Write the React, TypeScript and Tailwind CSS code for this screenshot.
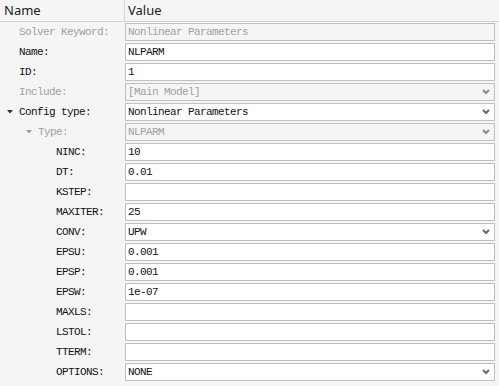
import React from 'react';

type Row = {
  label: string;
  value: string;
  level: number;
  disabled?: boolean;
  select?: boolean;
  toggle?: boolean;
};

const rows: Row[] = [
  { label: 'Solver Keyword:', value: 'Nonlinear Parameters', level: 0, disabled: true },
  { label: 'Name:', value: 'NLPARM', level: 0 },
  { label: 'ID:', value: '1', level: 0 },
  { label: 'Include:', value: '[Main Model]', level: 0, disabled: true, select: true },
  { label: 'Config type:', value: 'Nonlinear Parameters', level: 0, select: true, toggle: true },
  { label: 'Type:', value: 'NLPARM', level: 1, disabled: true, select: true, toggle: true },
  { label: 'NINC:', value: '10', level: 2 },
  { label: 'DT:', value: '0.01', level: 2 },
  { label: 'KSTEP:', value: '', level: 2 },
  { label: 'MAXITER:', value: '25', level: 2 },
  { label: 'CONV:', value: 'UPW', level: 2, select: true },
  { label: 'EPSU:', value: '0.001', level: 2 },
  { label: 'EPSP:', value: '0.001', level: 2 },
  { label: 'EPSW:', value: '1e-07', level: 2 },
  { label: 'MAXLS:', value: '', level: 2 },
  { label: 'LSTOL:', value: '', level: 2 },
  { label: 'TTERM:', value: '', level: 2 },
  { label: 'OPTIONS:', value: 'NONE', level: 2, select: true },
];

const indent = ['pl-[19px]', 'pl-[38px]', 'pl-[56px]'];
const arrowPos = ['pl-[7px]', 'pl-[26px]', 'pl-[45px]'];

const Chevron = ({ gray }: { gray?: boolean }) => (
  <svg width="8" height="6" viewBox="0 0 8 6" className="shrink-0">
    <path d="M1 1 L4 4 L7 1" fill="none" stroke={gray ? '#888' : '#666'} strokeWidth="2" />
  </svg>
);

const Caret = ({ gray }: { gray?: boolean }) => (
  <svg width="6" height="4" viewBox="0 0 6 4" className="shrink-0">
    <path d="M0 0 H6 L3 3.5 Z" fill={gray ? '#9a9a9a' : '#333'} />
  </svg>
);

export default function App() {
  return (
    <div className="w-[499px] h-[386px] bg-[#f5f5f5] overflow-hidden" style={{ fontFamily: '"Liberation Mono", monospace' }}>
      <div className="flex h-[22px] border-b border-[#d4d4d4] text-[13px] text-[#1a1a1a]" style={{ fontFamily: '"Noto Sans", sans-serif' }}>
        <div className="w-[125px] border-r border-[#d4d4d4] pl-[4px] flex items-center">Name</div>
        <div className="flex-1 pl-[3px] flex items-center">Value</div>
      </div>
      <div className="flex flex-col gap-[2px] pt-[1px]">
        {rows.map((r) => (
          <div key={r.label} className="flex h-[18px] text-[11px] tracking-[-0.6px]">
            <div className={`relative w-[125px] flex items-center ${indent[r.level]} ${r.disabled ? 'text-[#a0a0a0]' : 'text-[#111]'}`}>
              {r.toggle && (
                <div className={`absolute left-0 top-0 h-full flex items-center ${arrowPos[r.level]}`}>
                  <Caret gray={r.disabled} />
                </div>
              )}
              {r.label}
            </div>
            <div
              className={`w-[370px] flex items-center justify-between border border-[#c0c0c0] pl-[2px] pr-[4px] ${
                r.disabled ? 'bg-[#f5f5f5] text-[#a0a0a0]' : 'bg-white text-[#111]'
              }`}
            >
              <span>{r.value}</span>
              {r.select && <Chevron gray={r.disabled} />}
            </div>
          </div>
        ))}
      </div>
    </div>
  );
}
